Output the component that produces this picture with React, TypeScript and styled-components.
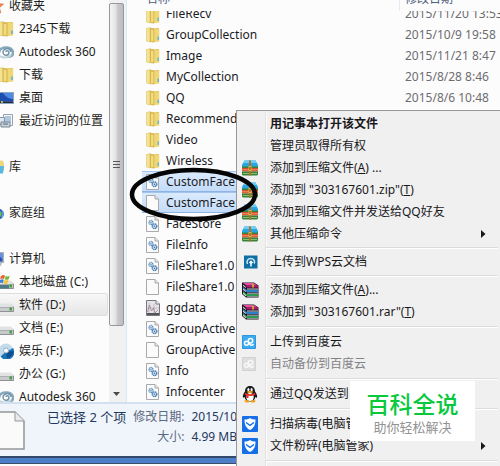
import React from 'react';
import styled, { createGlobalStyle, css } from 'styled-components';

const GlobalStyle = createGlobalStyle`
  * { box-sizing: border-box; }
  html, body { margin: 0; padding: 0; }
  body {
    overflow: hidden;
    background: #fcfcfd;
    color: #1b1b1f;
    font: 12px/20px 'Noto Sans', 'Noto Sans CJK SC', sans-serif;
  }
  button { font: inherit; color: inherit; }
`;

const Desktop = styled.div`
  position: relative;
  min-height: 100vh;
  overflow: hidden;
`;

const Explorer = styled.main`
  display: grid;
  grid-template-columns: 127px minmax(0, 1fr);
`;

const Sidebar = styled.nav`
  display: flex;
  overflow: hidden;
  background: #fcfcfd;
  border-right: 1px solid #dbe8f6;
`;

const Places = styled.div`
  flex: 1;
  min-width: 0;
  margin: -6px 0 -6px -12px;
`;

const Place = styled.a<{ $child?: boolean; $active?: boolean }>`
  display: flex;
  align-items: center;
  gap: 5px;
  height: 23px;
  margin-right: 1px;
  padding-left: ${p => (p.$child ? 10 : 0)}px;
  border: 1px solid transparent;
  border-left: 0;
  border-radius: 3px;
  color: #1d1d20;
  text-decoration: none;
  white-space: nowrap;
  svg { flex: none; }
  ${p => p.$active && css`
    border-color: #dedede;
    background: linear-gradient(#f8f8f8, #e6e6e7);
  `}
`;

const PlaceGap = styled.div`
  height: 23px;
`;

const ScrollBar = styled.div`
  display: flex;
  flex-direction: column;
  width: 17px;
  padding: 3px 2px 0 0;
  background: #f1f1f2;
`;

const Thumb = styled.div`
  display: flex;
  flex: 1;
  align-items: center;
  justify-content: center;
  border: 1px solid #98989c;
  border-radius: 2px;
  background: linear-gradient(90deg, #f5f5f6, #e2e2e4 45%, #c8c8cc 60%, #bcbcc2);
`;

const ScrollDown = styled.button`
  display: flex;
  align-items: flex-end;
  justify-content: center;
  height: 76px;
  padding: 0 0 6px;
  border: 0;
  background: none;
`;

const FileTable = styled.table`
  width: calc(100% - 15px);
  margin-left: 15px;
  border-collapse: separate;
  border-spacing: 0;
  table-layout: fixed;
  white-space: nowrap;
  th, td { padding: 0; text-align: left; font-weight: 400; }
`;

const NameHead = styled.th`
  width: 257px;
`;

const HeadLabel = styled.div<{ $divided?: boolean }>`
  height: 11px;
  padding-left: ${p => (p.$divided ? 5 : 4)}px;
  overflow: hidden;
  color: #4c607a;
  border-left: ${p => (p.$divided ? '1px solid #e3eaf4' : '0')};
  span { display: block; margin-top: -9px; line-height: 16px; }
`;

const FileRow = styled.tr<{ $selected?: boolean }>`
  ${p => p.$selected && css`
    td {
      background: linear-gradient(#dcebfc, #c2dbfa);
      box-shadow: inset 0 1px #a3c4ec, inset 0 -1px #8db4e3;
    }
  `}
`;

const FileName = styled.div<{ $cut?: boolean }>`
  display: flex;
  align-items: ${p => (p.$cut ? 'flex-end' : 'center')};
  gap: 6px;
  height: ${p => (p.$cut ? 13 : 21)}px;
  padding-left: 4px;
  overflow: hidden;
  svg { flex: none; }
`;

const FileDate = styled.div<{ $cut?: boolean }>`
  display: flex;
  align-items: ${p => (p.$cut ? 'flex-end' : 'center')};
  height: ${p => (p.$cut ? 13 : 21)}px;
  padding-left: 6px;
  overflow: hidden;
  color: #6d6d70;
`;

const Details = styled.footer`
  display: flex;
  gap: 22px;
  height: 54px;
  padding-top: 3px;
  border-top: 2px solid #d3e0f0;
  background: #f0f4fb;
  color: #1e395b;
`;

const DocPreview = styled.div`
  width: 25px;
  padding-top: 4px;
`;

const Facts = styled.dl`
  display: grid;
  grid-template-columns: auto auto auto;
  column-gap: 7px;
  align-content: start;
  margin: 0;
  white-space: nowrap;
  dt { color: #5a6a80; text-align: right; }
  dd { margin: 0; }
`;

const Summary = styled.div`
  grid-row: span 2;
  font-size: 13px;
`;

const Frame = styled.div`
  height: 8px;
  border-top: 2px solid #33496b;
  border-bottom: 1px solid #3b4d6b;
  background: #4d7fc8;
`;

const Menu = styled.div`
  position: absolute;
  top: 110px;
  left: 236px;
  right: 0;
  bottom: 0;
  overflow: hidden;
  padding: 2px 2px 0 0;
  border: solid #98989b;
  border-width: 1px 0 0 1px;
  background: linear-gradient(90deg, #f0f0f0 28px, #e2e2e3 28px, #e2e2e3 29px, #fbfbfb 29px, #fbfbfb 30px, #f0f0f0 30px);
`;

const MenuItem = styled.button<{ $strong?: boolean }>`
  display: grid;
  grid-template-columns: 20px 1fr 12px;
  column-gap: 8px;
  align-items: center;
  width: 100%;
  height: 22px;
  padding: 0 5px;
  border: 0;
  background: none;
  text-align: left;
  white-space: nowrap;
  font-weight: ${p => (p.$strong ? 700 : 400)};
  color: #19191c;
  &:disabled { color: #838386; }
  svg { display: block; }
`;

const MenuRule = styled.hr<{ $tight?: boolean }>`
  height: 2px;
  margin: ${p => (p.$tight ? 2 : 3)}px 0 ${p => (p.$tight ? 2 : 3)}px 29px;
  border: 0;
  border-top: 1px solid #dcdcdd;
  background: #fff;
`;

const Marker = styled.svg`
  position: absolute;
  top: 166px;
  left: 128px;
`;

const Stamp = styled.div`
  position: absolute;
  right: 25px;
  bottom: 25px;
  display: flex;
  flex-direction: column;
  align-items: center;
  width: 125px;
  height: 60px;
  padding-top: 9px;
  background: #fff;
  color: #929292;
  font-size: 13px;
  line-height: 18px;
  strong { color: #08c83c; font-size: 23px; line-height: 28px; font-weight: 500; }
`;

/* ---------- icons ---------- */

const FolderIcon = ({ size = 14 }: { size?: number }) => (
  <svg width={size} height="16" viewBox="0 0 14 16" preserveAspectRatio="none">
    <path d="M5 1.5 13 1v13l-7 1z" fill="#e3bf55" />
    <path d="M8 2h5.300v12.500L8 15z" fill="#efd676" />
    <path d="M.5 1.500 4 .6V15l-3.500-1z" fill="#f4e391" stroke="#dabb58" strokeWidth=".5" />
    <path d="M4 .6 8.300 2v13.400L4 15z" fill="#d7b649" />
    <path d="M5 2.500 7.400 3v11l-2.400.4z" fill="#f1dc84" />
    <path d="M11.500 9.500h1.500V13h-1.500z" fill="#68b5d8" />
  </svg>
);

const PagePath = () => (
  <>
    <path d="M.5.5h8.500l3.500 3.500v11.500H.5z" fill="#fbfbfb" stroke="#a9a9ac" />
    <path d="M9 .5V4h3.500" fill="#e4e4e6" stroke="#a9a9ac" />
  </>
);

const PageIcon = () => (
  <svg width="14" height="16" viewBox="0 0 14 16"><PagePath /></svg>
);

const GearPageIcon = () => (
  <svg width="14" height="16" viewBox="0 0 14 16">
    <PagePath />
    <circle cx="5" cy="6.500" r="2" fill="#d9ebf9" stroke="#5f90c0" strokeWidth="1.300" strokeDasharray="1.200 .4" />
    <circle cx="8.500" cy="10.200" r="2.300" fill="#d9ebf9" stroke="#4c7db3" strokeWidth="1.400" strokeDasharray="1.300 .4" />
    <circle cx="5" cy="6.500" r=".6" fill="#3d6c9f" />
    <circle cx="8.500" cy="10.200" r=".8" fill="#3d6c9f" />
  </svg>
);

const GraphPageIcon = () => (
  <svg width="14" height="16" viewBox="0 0 14 16">
    <path d="M.5.5H10L13.500 4v11.500H.5z" fill="#e5e3e8" stroke="#77777c" />
    <path d="M10 .5V4h3.500" fill="#fff" stroke="#77777c" />
    <path d="M3 3v10M1 8h12M8 4v10" stroke="#b7b2bf" strokeWidth=".8" />
    <path d="m1.500 12 2-7 2 6 2-3 1.500 5 3-3" fill="none" stroke="#a5808f" strokeWidth=".8" />
    <path d="M1 14h12" stroke="#55555c" strokeWidth="2" />
  </svg>
);

const StarIcon = () => (
  <svg width="16" height="16" viewBox="0 0 16 16">
    <path d="m8 1 2 4.700 5.500.4-4 3.600L12.800 15 8 12.200 3.200 15l1.300-5.300-4-3.600L6 5.700z" fill="#f4874b" stroke="#d9642f" strokeWidth=".6" />
  </svg>
);

const AutodeskIcon = () => (
  <svg width="16" height="16" viewBox="0 0 16 16" fill="none">
    <path d="M1 9c0-4 4-6 8-5.500 4 .5 6 2.500 6 5.500s-3 4.500-6 3.500" stroke="#86a9b9" strokeWidth="2.500" />
    <path d="M13 8c0-3-3-4-5.500-3S4 9 6 10.500s5 .5 5-2-3-2-3-.5" stroke="#6f93a7" strokeWidth="1.500" />
    <path d="M2 12c3 2 8 2 11-1" stroke="#bfd2dc" strokeWidth="2" />
  </svg>
);

const DesktopIcon = () => (
  <svg width="16" height="16" viewBox="0 0 16 16">
    <path d="M0 2h16v12H0z" fill="#8fa6bd" />
    <path d="M0 3h15v8.500H0z" fill="#1c4eb0" />
    <path d="M5 3h10v6C11 9 8 7 5 3z" fill="#4f8ae2" />
    <path d="M0 11.500h15V13H0z" fill="#1c2b45" />
    <circle cx="4" cy="12" r="1" fill="#e6d34d" />
  </svg>
);

const RecentIcon = () => (
  <svg width="16" height="16" viewBox="0 0 16 16">
    <path d="M5.500 1.500h9v11h-9z" fill="#f3f6f9" stroke="#98a3ad" />
    <path d="M7 4h6M7 6h6M7 8h6" stroke="#6c9bc4" />
    <path d="M1.500 4.500h5v7h-5z" fill="#dfe8f0" stroke="#8796a4" />
    <path d="M3 9h9v5H3z" fill="#c9d3dc" stroke="#768490" />
    <path d="M5 11h5" stroke="#4b6b8b" />
  </svg>
);

const LibraryIcon = () => (
  <svg width="16" height="16" viewBox="0 0 16 16">
    <path d="M1 3h8v11H1z" fill="#e2c263" />
    <path d="M6 1.500h8.500L16 4v8H6z" fill="#f0d57d" />
    <path d="M9 7h7l-1 7.500H9z" fill="#58b8df" />
  </svg>
);

const HomeGroupIcon = () => (
  <svg width="16" height="16" viewBox="0 0 16 16">
    <circle cx="6" cy="9" r="5.500" fill="#4ea765" />
    <circle cx="11" cy="9" r="5" fill="#2a58bd" />
    <path d="m12 6 2 2-1 4-3-2z" fill="#63bf5b" />
    <path d="M13 4.500c2 1 3 4 1 8" fill="none" stroke="#9cc5f5" />
  </svg>
);

const ComputerIcon = () => (
  <svg width="16" height="16" viewBox="0 0 16 16">
    <path d="M1 1h15v11H1z" fill="#aab4c1" />
    <path d="M2.500 2.500h12v8h-12z" fill="#2850b5" />
    <path d="M9 2.500h5.500v6z" fill="#6894e5" />
    <path d="M6 12h8l-1 3H5z" fill="#b9c0c8" />
  </svg>
);

const DriveShape = () => (
  <>
    <path d="M2.500 7h10L16 10v4c0 .6-.4 1-1 1H1c-.6 0-1-.4-1-1v-4z" fill="#8f9194" />
    <path d="M2.500 6.500h10l3 3.500H0z" fill="#e1e2e4" />
    <path d="M1 10.500h14v3.500H1z" fill="#c8cacc" />
    <path d="M11.500 10.500H14v3h-2.500z" fill="#3fa142" />
  </>
);

const DriveIcon = () => (
  <svg width="16" height="16" viewBox="0 0 16 16"><DriveShape /></svg>
);

const SystemDriveIcon = () => (
  <svg width="16" height="16" viewBox="0 0 16 16">
    <DriveShape />
    <path d="M0 11h11v3.500H0z" fill="#4d7b84" />
    <path d="M3 2c2-1.500 3-1 4-.3L6 5c-1-.8-2.500-.8-4 .3z" fill="#e8622d" />
    <path d="M7.700 2c1.300.7 2.500.5 4-.3l-1 3.500c-1.500 1-3 .7-4 0z" fill="#76b83a" />
    <path d="M2 6c1.500-1.200 2.800-1 3.800-.3l-1 3.500c-1.200-.7-2.500-.7-3.800.3z" fill="#3a86d5" />
    <path d="M6.500 6c1.200.7 2.500.7 4-.2l-1 3.500c-1.500 1-2.900.7-4 0z" fill="#f3c332" />
  </svg>
);

const DiscIcon = () => (
  <svg width="16" height="16" viewBox="0 0 16 16">
    <circle cx="8" cy="8" r="7.500" fill="#c3dceb" />
    <path d="M15 5a7.500 7.500 0 0 1-12.500 8.500L7 9.500z" fill="#1c75b5" />
    <path d="M15.500 8A7.500 7.500 0 0 1 9 15.400L8 9z" fill="#0f4f8e" />
    <circle cx="8" cy="7.500" r="2.500" fill="#fff" stroke="#8eb2c8" />
  </svg>
);

const ZipIcon = () => (
  <svg width="16" height="16" viewBox="0 0 16 16">
    <path d="M2.500.5h11L16 5v2H0V5z" fill="#29a5e2" />
    <path d="M2.500.5h11L14.600 3H1.400z" fill="#6dcdf4" />
    <path d="M0 6.500h16v2H0z" fill="#3b7f3c" />
    <path d="M0 8h16v3.500H0z" fill="#d9512c" />
    <path d="M0 9.500h16v.7H0z" fill="#f4ad82" />
    <path d="M0 11.500h16V14a1.500 1.500 0 0 1-1.500 1.500h-13A1.500 1.500 0 0 1 0 14z" fill="#39813a" />
    <path d="M1 13h14v1H1z" fill="#8cc06c" />
    <path d="M7 .5h2v15H7z" fill="#a87429" />
    <path d="M6.500 6h3v5h-3z" fill="#e5b544" />
    <path d="M7.500 7h1v3h-1z" fill="#68461b" />
  </svg>
);

const WpsIcon = () => (
  <svg width="16" height="14" viewBox="0 0 16 14">
    <path d="M2 .5h13.500v13H2z" fill="#0e6fa5" />
    <path d="M5.500 9C4 6 6 3.500 8.800 3.500s4.700 2.500 3.200 5" fill="none" stroke="#cfe7f4" strokeWidth="1.500" />
    <path d="M9 11.500V6.500M7.500 8 9 6.300 10.500 8" fill="none" stroke="#fff" strokeWidth="1.500" />
  </svg>
);

const RarIcon = () => (
  <svg width="17" height="16" viewBox="0 0 17 16">
    <path d="M0 .5h12l4.500 3v12H4L0 12z" fill="#1b1622" />
    <path d="M1 1h10.500l4 2.500H4.500z" fill="#ec4ba0" />
    <path d="M4.500 3.500H16v2H4.500z" fill="#b5186f" />
    <path d="m1 5 3.500 2.800H16V10H4.500L1 7z" fill="#2c7fc9" />
    <path d="M5 6.600h11v.8H5z" fill="#f4f2ed" />
    <path d="m1 9 3.500 3H16v2H4.500L1 11z" fill="#2b9b54" />
    <path d="M5 10.800h11v.8H5zM5 14.400h11v.6H5z" fill="#fff" />
    <path d="M1 2.500 4 5v1L1 4zm0 4L4 9v1L1 8zm0 4L4 13v1.500L1 12z" fill="#d7d1cf" />
    <path d="M10 1.500h2v4h-2z" fill="#c4a142" />
  </svg>
);

const CloudLinkIcon = ({ muted }: { muted?: boolean }) => (
  <svg width="14" height="14" viewBox="0 0 14 14">
    <path d="M.5.5h13v13H.5z" fill={muted ? '#dedede' : '#3da9ee'} stroke={muted ? '#d2d2d2' : '#2c98df'} />
    <g fill="none" stroke={muted ? '#f8f8f8' : '#fff'} strokeWidth="1.500">
      <circle cx="4.500" cy="8.300" r="2" />
      <circle cx="8.500" cy="5.700" r="2.200" />
      <path d="m6.500 8 1.800 1.800c.8.800 2.500.7 3-.8" />
    </g>
  </svg>
);

const PenguinIcon = () => (
  <svg width="16" height="17" viewBox="0 0 16 17">
    <path d="M8 0c3.500 0 5 2.500 5 5.500 1.500 2 2.700 4.500 2 6-.4.800-1.500-.7-1.500-.7C13 14 11 15.500 8 15.500S3 14 2.500 10.800c0 0-1.100 1.500-1.500.7-.7-1.500.5-4 2-6C3 2.500 4.500 0 8 0z" fill="#18181b" />
    <ellipse cx="8" cy="11" rx="3.700" ry="4" fill="#fff" />
    <ellipse cx="6.400" cy="3.700" rx="1.100" ry="1.600" fill="#fff" />
    <ellipse cx="9.600" cy="3.700" rx="1.100" ry="1.600" fill="#fff" />
    <path d="M4.500 5.700c2-.9 5-.9 7 0-1.500 1.800-5.500 1.800-7 0z" fill="#f3a320" />
    <path d="M3 6.800c3 1.800 7 1.800 10 0l.3 2c-3 1.700-7 1.700-10.500 0z" fill="#e12f27" />
    <path d="M4.500 8.500h2V12h-2z" fill="#e12f27" />
    <path d="M2.500 15c0-1.500 4-1.500 5 .5 0 1.500-5 1.500-5-.5zm11 0c0-1.500-4-1.500-5 .5 0 1.500 5 1.500 5-.5z" fill="#f0a01f" />
  </svg>
);

const ShieldIcon = () => (
  <svg width="16" height="16" viewBox="0 0 16 16">
    <rect width="16" height="16" rx="1" fill="#176fe8" />
    <path d="M8 2c1.500 1 3.500 1.500 5.500 1.500 0 5-1.500 8.500-5.500 10.500C4 12 2.500 8.500 2.500 3.500 4.500 3.500 6.500 3 8 2z" fill="#fff" />
    <path d="M3.800 5.500 8 8.500l4.200-3-.4 2L8 10.300 4.200 7.500z" fill="#176fe8" />
  </svg>
);

const SubmenuArrow = () => (
  <svg width="5" height="8" viewBox="0 0 5 8"><path d="m0 0 4.500 4L0 8z" fill="#18181b" /></svg>
);

/* ---------- data ---------- */

type PlaceEntry = { label: string; icon: React.ReactNode; child?: boolean; active?: boolean } | null;

const places: PlaceEntry[] = [
  { label: '收藏夹', icon: <StarIcon /> },
  { label: '2345下载', icon: <FolderIcon size={16} />, child: true },
  { label: 'Autodesk 360', icon: <AutodeskIcon />, child: true },
  { label: '下载', icon: <FolderIcon size={16} />, child: true },
  { label: '桌面', icon: <DesktopIcon />, child: true },
  { label: '最近访问的位置', icon: <RecentIcon />, child: true },
  null,
  { label: '库', icon: <LibraryIcon /> },
  null,
  { label: '家庭组', icon: <HomeGroupIcon /> },
  null,
  { label: '计算机', icon: <ComputerIcon /> },
  { label: '本地磁盘 (C:)', icon: <SystemDriveIcon />, child: true },
  { label: '软件 (D:)', icon: <DriveIcon />, child: true, active: true },
  { label: '文档 (E:)', icon: <DriveIcon />, child: true },
  { label: '娱乐 (F:)', icon: <DiscIcon />, child: true },
  { label: '办公 (G:)', icon: <DriveIcon />, child: true },
  { label: 'Autodesk 360', icon: <AutodeskIcon />, child: true },
];

const fileIcons = {
  folder: <FolderIcon />,
  page: <PageIcon />,
  gear: <GearPageIcon />,
  graph: <GraphPageIcon />,
};

type FileEntry = { name: string; kind: keyof typeof fileIcons; date?: string; selected?: boolean };

const files: FileEntry[] = [
  { name: 'FileRecv', kind: 'folder', date: '2015/11/20 13:53' },
  { name: 'GroupCollection', kind: 'folder', date: '2015/10/9 19:58' },
  { name: 'Image', kind: 'folder', date: '2015/11/21 8:47' },
  { name: 'MyCollection', kind: 'folder', date: '2015/8/28 8:46' },
  { name: 'QQ', kind: 'folder', date: '2015/8/6 10:48' },
  { name: 'Recommend', kind: 'folder' },
  { name: 'Video', kind: 'folder' },
  { name: 'Wireless', kind: 'folder' },
  { name: 'CustomFace', kind: 'gear', selected: true },
  { name: 'CustomFace', kind: 'page', selected: true },
  { name: 'FaceStore', kind: 'gear' },
  { name: 'FileInfo', kind: 'gear' },
  { name: 'FileShare1.0', kind: 'gear' },
  { name: 'FileShare1.0', kind: 'page' },
  { name: 'ggdata', kind: 'graph' },
  { name: 'GroupActive', kind: 'gear' },
  { name: 'GroupActive', kind: 'page' },
  { name: 'Info', kind: 'gear' },
  { name: 'Infocenter', kind: 'gear' },
];

type MenuEntry = {
  label: React.ReactNode;
  icon?: React.ReactNode;
  strong?: boolean;
  disabled?: boolean;
  submenu?: boolean;
};

const menuGroups: { tight?: boolean; items: MenuEntry[] }[] = [
  {
    tight: true,
    items: [
      { label: '用记事本打开该文件', strong: true },
      { label: '管理员取得所有权' },
      { label: <>添加到压缩文件(<u>A</u>) ...</>, icon: <ZipIcon /> },
      { label: <>添加到 "303167601.zip"(<u>T</u>)</>, icon: <ZipIcon /> },
      { label: '添加到压缩文件并发送给QQ好友', icon: <ZipIcon /> },
      { label: '其他压缩命令', icon: <ZipIcon />, submenu: true },
    ],
  },
  { tight: true, items: [{ label: '上传到WPS云文档', icon: <WpsIcon /> }] },
  {
    items: [
      { label: <>添加到压缩文件(<u>A</u>)...</>, icon: <RarIcon /> },
      { label: <>添加到 "303167601.rar"(<u>T</u>)</>, icon: <RarIcon /> },
    ],
  },
  {
    items: [
      { label: '上传到百度云', icon: <CloudLinkIcon /> },
      { label: '自动备份到百度云', icon: <CloudLinkIcon muted />, disabled: true },
    ],
  },
  { items: [{ label: '通过QQ发送到', icon: <PenguinIcon /> }] },
  {
    items: [
      { label: '扫描病毒(电脑管家)', icon: <ShieldIcon /> },
      { label: '文件粉碎(电脑管家)', icon: <ShieldIcon />, submenu: true },
    ],
  },
];

export default function App() {
  return (
    <Desktop>
      <GlobalStyle />
      <Explorer>
        <Sidebar>
          <Places>
            {places.map((p, i) =>
              p ? (
                <Place key={i} href="#" $child={p.child} $active={p.active}>
                  {p.icon}
                  {p.label}
                </Place>
              ) : (
                <PlaceGap key={i} />
              ),
            )}
          </Places>
          <ScrollBar>
            <Thumb>
              <svg width="7" height="8" viewBox="0 0 7 8">
                <path d="M0 .5h7M0 3.500h7M0 6.500h7" stroke="#58585c" />
              </svg>
            </Thumb>
            <ScrollDown aria-label="Scroll down">
              <svg width="7" height="4" viewBox="0 0 7 4"><path d="M0 0h7L3.500 4z" fill="#4b4b4f" /></svg>
            </ScrollDown>
          </ScrollBar>
        </Sidebar>
        <FileTable>
          <thead>
            <tr>
              <NameHead><HeadLabel><span>名称</span></HeadLabel></NameHead>
              <th><HeadLabel $divided><span>修改日期</span></HeadLabel></th>
            </tr>
          </thead>
          <tbody>
            {files.map((f, i) => (
              <FileRow key={i} $selected={f.selected}>
                <td><FileName $cut={i === 0}>{fileIcons[f.kind]}{f.name}</FileName></td>
                <td><FileDate $cut={i === 0}>{f.date}</FileDate></td>
              </FileRow>
            ))}
          </tbody>
        </FileTable>
      </Explorer>

      <Details>
        <DocPreview>
          <svg width="25" height="40" viewBox="0 0 25 40">
            <path d="M-5 1h20l9 9v28H-5z" fill="#fafafa" stroke="#949699" strokeWidth="1.500" />
            <path d="M15 1v9h9" fill="#e9eaec" stroke="#949699" />
          </svg>
        </DocPreview>
        <Facts>
          <Summary>已选择 2 个项</Summary>
          <dt>修改日期:</dt>
          <dd>2015/10</dd>
          <dt>大小:</dt>
          <dd>4.99 MB</dd>
        </Facts>
      </Details>
      <Frame />

      <Menu role="menu">
        {menuGroups.map((g, i) => (
          <React.Fragment key={i}>
            {g.items.map((m, j) => (
              <MenuItem key={j} role="menuitem" $strong={m.strong} disabled={m.disabled}>
                <span>{m.icon}</span>
                <span>{m.label}</span>
                {m.submenu && <SubmenuArrow />}
              </MenuItem>
            ))}
            <MenuRule $tight={g.tight} />
          </React.Fragment>
        ))}
      </Menu>

      <Marker width="132" height="58" viewBox="0 0 132 58" aria-hidden="true">
        <ellipse cx="65.500" cy="28.500" rx="61.500" ry="24.500" fill="none" stroke="#050505" strokeWidth="4.500" />
      </Marker>

      <Stamp>
        <strong>百科全说</strong>
        助你轻松解决
      </Stamp>
    </Desktop>
  );
}
